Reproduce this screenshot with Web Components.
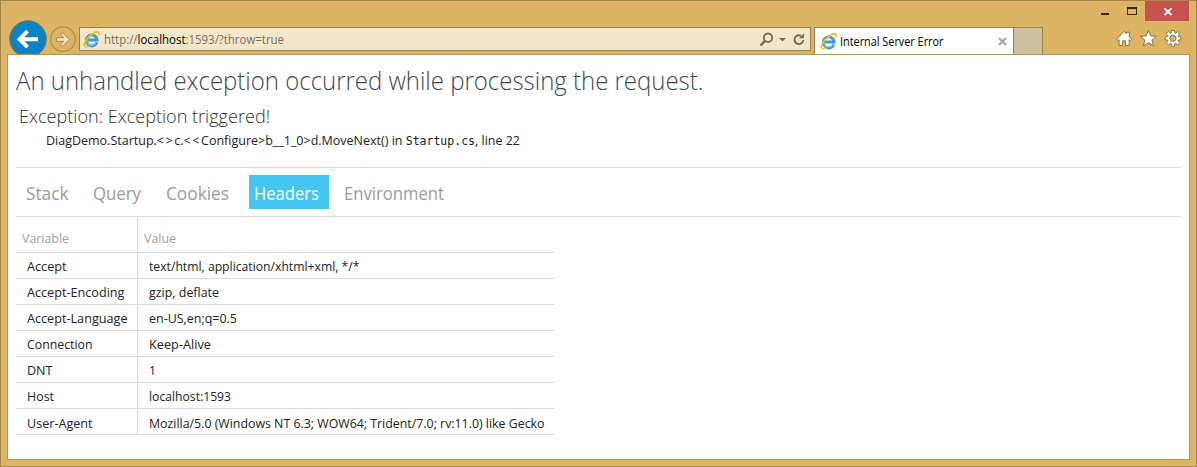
<!DOCTYPE html>
<html lang="en"><head><meta charset="utf-8"><title>Internal Server Error</title>
<style>html,body{margin:0;height:100%;overflow:hidden}body{font-family:"Open Sans","Noto Sans",sans-serif}</style></head>
<body><browser-window></browser-window>
<script>
function define(name, html, init){
  customElements.define(name, class extends HTMLElement{
    connectedCallback(){
      if(this.shadowRoot) return;
      const t=document.createElement('template'); t.innerHTML=html;
      this.attachShadow({mode:'open'}).append(t.content.cloneNode(true));
      if(init) init(this,this.shadowRoot);
    }
  });
}
/* One line of text, condensed or expanded to the width given in px. */
define('fit-text','<style>:host{display:block;white-space:pre}span{display:inline-block;transform-origin:0 50%}</style><span><slot></slot></span>',(el,root)=>{
  const s=root.querySelector('span'), w=+el.getAttribute('w');
  el.style.width=w+'px';
  s.style.transform='scaleX('+(w/s.getBoundingClientRect().width)+')';
});
define('ie-logo',`<style>:host{display:block;width:17px;height:17px}svg{display:block}</style>
<svg width="17" height="17" viewBox="0 0 17 17" fill="none">
<path d="M13.9 11.3A5.5 5.5 0 1 1 14.2 9H5" stroke="#3a9bd6" stroke-width="2.8"/>
<path d="M13.3 11.8A5.5 5.5 0 0 1 3.4 10" stroke="#7fcdf0" stroke-width="1"/>
<path d="M2.8 15.8C.2 15.5 1.2 10.6 5.2 6.4 9 2.3 14.4-.2 15.6 1.3c.6.8.3 2-.3 3.1" stroke="#f3bd1c" stroke-width="1.7"/>
<path d="M2.6 15.9c1.3.3 3-.5 4-1.2" stroke="#f3bd1c" stroke-width="1.2"/></svg>`);
define('window-buttons',`<style>:host{display:flex;justify-content:flex-end;height:20px;padding-right:7px}svg{display:block}</style>
<svg width="92" height="20" viewBox="1097 1 92 20" shape-rendering="crispEdges">
<path fill="#2a2a2a" d="M1101 13h8v2h-8z"/><path fill="#2a2a2a" fill-rule="evenodd" d="M1127 7h10v8h-10zM1128 9v5h8V9z"/>
<path fill="#c75050" d="M1145 1h45v20h-45z"/><path shape-rendering="auto" d="M1164.5 8.4l7 6.6M1171.5 8.4l-7 6.6" stroke="#fff" stroke-width="1.8"/></svg>`);
define('nav-buttons',`<style>:host{display:block;width:71px;height:35px;margin-top:-7px}svg{display:block}</style>
<svg width="71" height="35" viewBox="8 19.5 71 35">
<circle cx="28" cy="38.5" r="18.2" fill="#0a84c6" stroke="#7c6b48" stroke-width="1"/>
<path d="M38 38.7H21M27.6 30.7L19.6 38.7l8 8" fill="none" stroke="#fff" stroke-width="3.9"/>
<circle cx="63" cy="38.7" r="12.3" fill="none" stroke="#ae8c4b" stroke-width="1.2"/>
<path d="M56.5 37.2h7.3l-3.1-3.3 2-1.6 6.7 6.7-6.7 6.7-2-1.6 3.1-3.3h-7.3z" fill="#f1e2c3" stroke="#ab8b50" stroke-width="1"/></svg>`);
define('address-bar',`<style>:host{box-sizing:border-box;display:flex;align-items:center;width:732px;height:24px;border:1px solid #9c8148;background:#f3e6c9;padding:0 4px 0 3px}
fit-text{font-size:12.6px;line-height:22px;margin:1px auto 0 4px;color:#77705f}b{font-weight:400;color:#000}</style>
<ie-logo></ie-logo><fit-text w="180">http://<b>localhost</b>:1593/?throw=true</fit-text>
<svg width="48" height="18" viewBox="758 30 48 18" fill="none" stroke="#746c58">
<circle cx="768" cy="37.7" r="4.2" stroke-width="1.9"/><path d="M765.2 40.7l-4.7 4.8" stroke-width="2.5"/>
<path d="M779 38h7l-3.5 3.6z" fill="#746c58" stroke="none"/>
<path d="M801 35.8a4.4 4.4 0 1 0 2.3 4.2" stroke-width="2"/><path d="M803.9 33.2v5h-5z" fill="#746c58" stroke="none"/></svg>`);
define('browser-tabs',`<style>:host{display:flex;height:27px;margin-left:3px}
.tab{box-sizing:border-box;width:200px;border:1px solid #9c8148;border-bottom:0;background:#fff;display:flex;align-items:center;padding:0 6px 0 5px;height:27px}
.new{box-sizing:border-box;width:29px;height:27px;border:solid #9c8148;border-width:1px 1px 0 0;background:#cdbf9f}
fit-text{font-size:12.4px;line-height:24px;color:#000;margin:2px auto 0 3px}</style>
<div class="tab"><ie-logo></ie-logo><fit-text w="103.5">Internal Server Error</fit-text><svg width="9" height="9"><path d="M1 1l7 7M8 1l-7 7" stroke="#a5a5a5" stroke-width="2.1"/></svg></div><div class="new"></div>`);
define('tool-icons',`<style>:host{display:block;margin-left:auto;margin-right:12px}svg{display:block}</style>
<svg width="72" height="24" viewBox="1112 27 72 24" fill="#fff" stroke="#8b7344" stroke-width="1">
<path d="M1116.7 39.2l7.4-7.9 2.4 2.5v-1.6h2.8v4.6l2.3 2.5-1.3 1.3-1.2-1v6h-3.5v-4.8h-3v4.8h-3.5v-6l-1.1 1z"/>
<path d="M1148.4 30.6l2.2 5.3 5.8.4-4.4 3.7 1.5 5.8-5.1-3.2-5 3.2 1.4-5.8-4.4-3.7 5.8-.4z"/>
<path id="g"/><circle cx="1173" cy="38.3" r="3.1" fill="#dcb463"/></svg>`,(el,root)=>{
  let d='';
  for(let i=0;i<8;i++){
    [[-.3,5.7],[-.2,8],[.2,8],[.3,5.7]].forEach(([a,r],j)=>{
      const t=i*Math.PI/4+a; d+=(i+j?'L':'M')+(1173+r*Math.sin(t)).toFixed(2)+' '+(38.3-r*Math.cos(t)).toFixed(2);
    });
  }
  root.getElementById('g').setAttribute('d',d+'z');
});
define('error-tab',`<style>:host{display:block;box-sizing:border-box;height:34px;padding:1px 10px 0 5px;font-size:18.2px;line-height:34px;color:#9b9b9b}
:host([selected]){background:#44c5f2;color:#fff}</style><slot></slot>`);
define('header-table',`<style>:host{display:grid;grid-template-columns:122px 416px;width:538px;color:#222;font-size:12.7px}
div{box-sizing:border-box;height:26px;border-bottom:1px solid #dcdcdc;padding:1px 0 0 11px;line-height:25px}
.k{border-right:1px solid #dcdcdc}.h{height:36px;color:#a0a0a0;padding:4px 0 0 6px;line-height:35px}.last{padding-top:2px}</style>`,(el,root)=>{
  const rows=[['Variable',47,'Value',32],['Accept',39.5,'text/html, application/xhtml+xml, */*',210.5],['Accept-Encoding',97.5,'gzip, deflate',70],['Accept-Language',100.5,'en-US,en;q=0.5',88],['Connection',65.5,'Keep-Alive',62],['DNT',25.5,'1',7],['Host',27,'localhost:1593',82],['User-Agent',65.5,'Mozilla/5.0 (Windows NT 6.3; WOW64; Trident/7.0; rv:11.0) like Gecko',395.5]];
  rows.forEach((r,i)=>[0,2].forEach(c=>{
    const d=document.createElement('div'), f=document.createElement('fit-text');
    d.className=(c?'':'k ')+(i?'':'h')+(i===7?'last':'');
    f.setAttribute('w',r[c+1]); f.textContent=r[c]; d.append(f); root.append(d);
  }));
});
define('error-page',`<style>:host{display:block;padding:7px 8px 0}
.title{font-size:26px;font-weight:300;line-height:36px;color:#3c4a57}
.ex{font-size:18.4px;font-weight:300;line-height:26px;margin:5px 0 0 3px;color:#333}
.at{font-size:12.6px;line-height:20px;margin:2px 0 0 30px;color:#222}
.at i{font-style:normal;letter-spacing:1.6px}
code{font:11.6px/1 "DejaVu Sans Mono",monospace}
nav{display:flex;margin-top:16px;border:solid #dcdcdc;border-width:1px 0;padding:7px 0 7px 5px}
nav error-tab+error-tab{margin-left:10px}</style>
<fit-text class="title" w="687.5">An unhandled exception occurred while processing the request.</fit-text>
<fit-text class="ex" w="251">Exception: Exception triggered!</fit-text>
<fit-text class="at" w="474">DiagDemo.Startup.<i>&lt;&gt;</i>c.<i>&lt;&lt;</i>Configure&gt;b__1_0&gt;d.MoveNext() in <code>Startup.cs</code>, line 22</fit-text>
<nav><error-tab><fit-text w="42.5">Stack</fit-text></error-tab><error-tab style="margin-left:9.5px"><fit-text w="48">Query</fit-text></error-tab><error-tab><fit-text w="63">Cookies</fit-text></error-tab><error-tab selected><fit-text w="65">Headers</fit-text></error-tab><error-tab><fit-text w="100">Environment</fit-text></error-tab></nav>
<header-table></header-table>`);
define('browser-window',`<style>:host{box-sizing:border-box;display:flex;flex-direction:column;width:1197px;height:467px;border:1px solid #a58748;background:#dcb463}
.bar{display:flex;height:27px;padding:6px 0 0 7px}
error-page{box-sizing:border-box;margin:0 6px;height:406px;border:1px solid #b3954f;background:#fff}</style>
<window-buttons></window-buttons><div class="bar"><nav-buttons></nav-buttons><address-bar></address-bar><browser-tabs></browser-tabs><tool-icons></tool-icons></div><error-page></error-page>`);
</script></body></html>
